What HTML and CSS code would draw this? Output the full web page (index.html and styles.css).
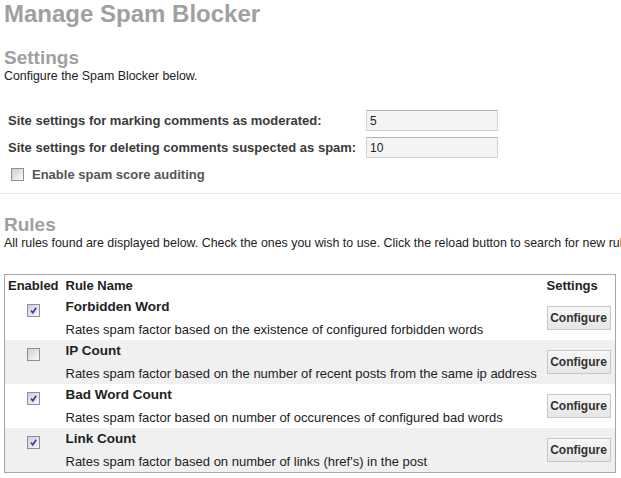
FILE: index.html
```html
<html lang="en">
  <head>
    <meta charset="UTF-8" />
    <meta name="viewport" content="width=device-width, initial-scale=1.0" />
    <title>Manage Spam Blocker</title>
    <link rel="stylesheet" href="styles.css">
  </head>
  <body>
    <h1 class="page-title">Manage Spam Blocker</h1>

    <div class="settings">
      <h2 class="section-title">Settings</h2>
      <p class="section-desc">Configure the Spam Blocker below.</p>

      <form class="settings-form">
        <label class="field-label" for="moderate">Site settings for marking comments as moderated:</label>
        <input class="field-input" id="moderate" type="text" value="5" />
        <label class="field-label" for="delete">Site settings for deleting comments suspected as spam:</label>
        <input class="field-input" id="delete" type="text" value="10" />
        <div class="audit-row">
          <span class="check"></span>
          <span class="audit-label">Enable spam score auditing</span>
        </div>
      </form>
    </div>

    <div class="rules-section">
      <h2 class="section-title rules-title">Rules</h2>
      <p class="section-desc nowrap">All rules found are displayed below. Check the ones you wish to use. Click the reload button to search for new rules.</p>

      <table class="rules">
        <colgroup>
          <col class="col-enabled" />
          <col />
          <col class="col-settings" />
        </colgroup>
        <thead>
          <tr>
            <th>Enabled</th>
            <th>Rule Name</th>
            <th>Settings</th>
          </tr>
        </thead>
        <tbody>
          <tr>
            <td class="cell-check">
              <span class="check checked"><svg width="11" height="11" viewBox="0 0 11 11"><path d="M3 5.5 L4.8 7.8 L8.2 2.8" fill="none" stroke="#3f3f96" stroke-width="1.7" /></svg></span>
            </td>
            <td>
              <div class="rule-name">Forbidden Word</div>
              <div class="rule-desc">Rates spam factor based on the existence of configured forbidden words</div>
            </td>
            <td class="cell-btn"><button class="btn" type="button">Configure</button></td>
          </tr>
          <tr class="alt">
            <td class="cell-check"><span class="check"></span></td>
            <td>
              <div class="rule-name">IP Count</div>
              <div class="rule-desc">Rates spam factor based on the number of recent posts from the same ip address</div>
            </td>
            <td class="cell-btn"><button class="btn" type="button">Configure</button></td>
          </tr>
          <tr>
            <td class="cell-check">
              <span class="check checked"><svg width="11" height="11" viewBox="0 0 11 11"><path d="M3 5.5 L4.8 7.8 L8.2 2.8" fill="none" stroke="#3f3f96" stroke-width="1.7" /></svg></span>
            </td>
            <td>
              <div class="rule-name">Bad Word Count</div>
              <div class="rule-desc">Rates spam factor based on number of occurences of configured bad words</div>
            </td>
            <td class="cell-btn"><button class="btn" type="button">Configure</button></td>
          </tr>
          <tr class="alt">
            <td class="cell-check">
              <span class="check checked"><svg width="11" height="11" viewBox="0 0 11 11"><path d="M3 5.5 L4.8 7.8 L8.2 2.8" fill="none" stroke="#3f3f96" stroke-width="1.7" /></svg></span>
            </td>
            <td>
              <div class="rule-name">Link Count</div>
              <div class="rule-desc">Rates spam factor based on number of links (href's) in the post</div>
            </td>
            <td class="cell-btn"><button class="btn" type="button">Configure</button></td>
          </tr>
        </tbody>
      </table>
    </div>
  </body>
</html>
```

FILE: styles.css
```css
body {
  font-family: "Liberation Sans", Arial, sans-serif;
  background-color: #fff;
  color: #222;
  margin: 0;
  padding: 0 4px;
  overflow: hidden;
}
.page-title {
  font-size: 24px;
  line-height: 28px;
  color: #a0a0a0;
  margin: 0;
}
.section-title {
  font-size: 19px;
  line-height: 22px;
  color: #a0a0a0;
  margin: 19px 0 0;
}
.section-desc {
  font-size: 12.4px;
  line-height: 15px;
  margin: 0;
}
.nowrap {
  white-space: nowrap;
}
.settings {
  border-bottom: 1px solid #e8e8e8;
  margin: 0 -4px;
  padding: 0 4px 8px;
}
.settings-form {
  display: grid;
  grid-template-columns: 358px 132px;
  grid-auto-rows: 21px;
  row-gap: 6px;
  align-items: center;
  margin: 26px 0 0;
  padding: 0 4px;
}
.field-label {
  font-size: 13px;
  font-weight: bold;
  color: #3a3a3a;
}
.field-input {
  box-sizing: border-box;
  width: 132px;
  height: 21px;
  padding: 0 3px;
  border: 1px solid #d2d2d2;
  border-top-color: #b4b4b4;
  background-color: #f4f4f4;
  font-family: inherit;
  font-size: 12px;
  color: #222;
}
.audit-row {
  grid-column: 1 / 3;
  display: flex;
  align-items: center;
  gap: 8px;
  padding-left: 3px;
}
.audit-label {
  font-size: 13px;
  font-weight: bold;
  color: #555;
}
.check {
  display: inline-block;
  width: 11px;
  height: 11px;
  border: 1px solid #8f8f8f;
  background: linear-gradient(135deg, #cfcfcf, #fbfbfb);
  vertical-align: top;
}
.check svg {
  display: block;
}
.check.checked {
  border-color: #8a8f9c;
  background: linear-gradient(135deg, #cdd0dc, #f6f6fa);
}
.rules-title {
  margin-top: 20px;
}
.rules {
  width: 612px;
  margin-top: 23px;
  border-collapse: collapse;
  border: 1px solid #a6a6a6;
  table-layout: fixed;
}
.col-enabled {
  width: 58px;
}
.col-settings {
  width: 72px;
}
.rules th {
  font-size: 13px;
  line-height: 21px;
  font-weight: bold;
  text-align: left;
  padding: 0 3px;
  color: #222;
}
.rules td {
  padding: 0 3px;
  vertical-align: top;
  height: 44px;
  box-sizing: border-box;
}
.rules tr.alt td {
  background-color: #f0f0f0;
}
.rules td.cell-check {
  text-align: center;
  padding-top: 8px;
}
.rules td.cell-btn {
  vertical-align: middle;
  padding: 0 4px 0 3px;
}
.rule-name {
  font-size: 13.5px;
  line-height: 20px;
  font-weight: bold;
  padding-top: 1px;
}
.rule-desc {
  font-size: 13px;
  line-height: 20px;
  margin-top: 3px;
  white-space: nowrap;
}
.btn {
  box-sizing: border-box;
  width: 64px;
  height: 24px;
  padding: 0;
  border: 1px solid #c8c8c8;
  background: linear-gradient(#f7f7f7, #e6e6e6);
  font-family: inherit;
  font-size: 12px;
  font-weight: bold;
  color: #333;
  cursor: pointer;
}
```
